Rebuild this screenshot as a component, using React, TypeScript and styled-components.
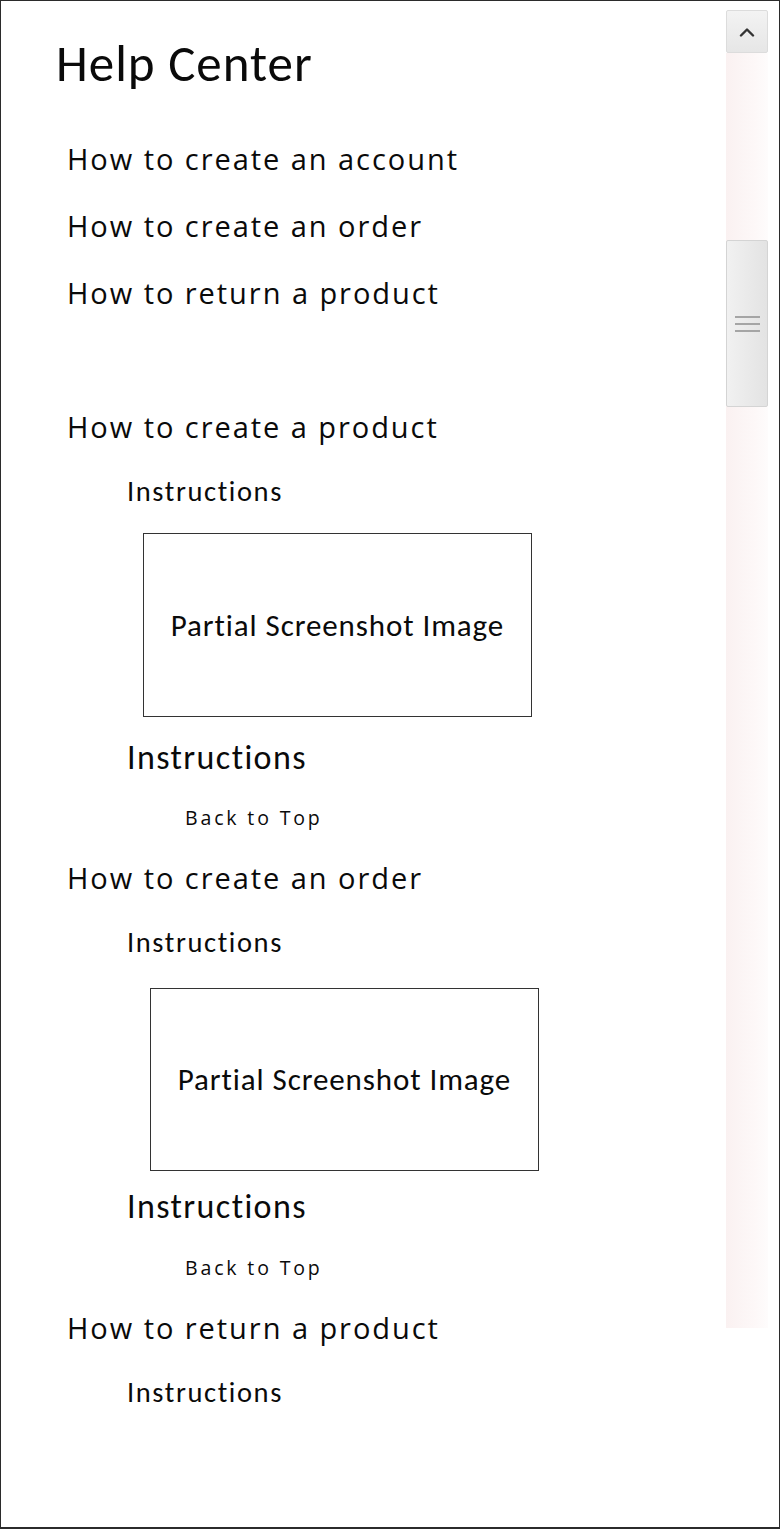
import React from "react";
import styled, { createGlobalStyle } from "styled-components";

const GlobalStyle = createGlobalStyle`
  html, body { margin: 0; padding: 0; background: #ffffff; }
  body { font-family: "Carlito", "Lato", sans-serif; color: #111; }
  * { box-sizing: border-box; }
`;

const Page = styled.div`
  width: 780px;
  height: 1529px;
  border: 1px solid #2b2b2b;
  border-bottom-width: 2px;
  display: flex;
  flex-direction: row;
  align-items: flex-start;
  overflow: hidden;
  background: #fff;
`;

const Main = styled.main`
  flex: 1;
  display: flex;
  flex-direction: column;
  align-items: flex-start;
`;

const Title = styled.h1`
  margin: 37px 0 0 55px;
  font-family: "Carlito", "Lato", sans-serif;
  font-weight: 400;
  font-size: 51px;
  line-height: 1;
  letter-spacing: 1px;
  color: #0a0a0a;
`;

const TopicList = styled.nav`
  display: flex;
  flex-direction: column;
  gap: 38px;
  margin: 55px 0 0 66px;
`;

const TopicLink = styled.a`
  display: block;
  font-family: "Open Sans", sans-serif;
  font-size: 29px;
  line-height: 1;
  letter-spacing: 1.95px;
  color: #0a0a0a;
  text-decoration: none;
`;

const Section = styled.section<{ $top: number }>`
  display: flex;
  flex-direction: column;
  align-items: flex-start;
  margin-top: ${(p) => p.$top}px;
`;

const SectionHeading = styled.h2`
  margin: 0 0 0 66px;
  font-family: "Open Sans", sans-serif;
  font-weight: 400;
  font-size: 29px;
  line-height: 1;
  letter-spacing: 1.95px;
  color: #0a0a0a;
`;

const Instructions = styled.p<{ $large?: boolean; $top: number }>`
  margin: ${(p) => p.$top}px 0 0 126px;
  font-family: "Carlito", "Lato", sans-serif;
  font-size: ${(p) => (p.$large ? 34 : 28.5)}px;
  letter-spacing: ${(p) => (p.$large ? 1.4 : 1.6)}px;
  line-height: 1;
  color: #0a0a0a;
`;

const ShotBox = styled.div<{ $left: number; $top: number; $height: number }>`
  margin: ${(p) => p.$top}px 0 0 ${(p) => p.$left}px;
  width: 389px;
  height: ${(p) => p.$height}px;
  border: 1px solid #333;
  display: flex;
  align-items: center;
  justify-content: center;
  padding-bottom: 1px;
  font-family: "Carlito", "Lato", sans-serif;
  font-size: 31px;
  letter-spacing: 0.9px;
  color: #0a0a0a;
`;

const BackToTop = styled.a<{ $top: number }>`
  display: block;
  margin: ${(p) => p.$top}px 0 0 184px;
  font-family: "Open Sans", sans-serif;
  font-size: 19.5px;
  line-height: 1;
  letter-spacing: 2.85px;
  color: #0a0a0a;
  text-decoration: none;
`;

const Scrollbar = styled.div`
  flex: 0 0 42px;
  width: 42px;
  height: 1318px;
  margin: 9px 11px 0 0;
  display: flex;
  flex-direction: column;
`;

const ScrollButton = styled.div`
  height: 43px;
  display: flex;
  align-items: center;
  justify-content: center;
  background: linear-gradient(to bottom, #f3f3f3, #e6e6e6);
  border: 1px solid #dcdcdc;
  border-radius: 2px;
`;

const ScrollTrack = styled.div`
  flex: 1;
  display: flex;
  flex-direction: column;
  padding-top: 187px;
  background: linear-gradient(to right, #faf1f1, #fdf8f8 70%, #fefcfc);
`;

const ScrollThumb = styled.div`
  height: 167px;
  display: flex;
  align-items: center;
  justify-content: center;
  background: linear-gradient(to right, #f1f1f1, #e3e3e3);
  border: 1px solid #d4d4d4;
  border-radius: 2px;
`;

const Grip = styled.div`
  width: 25px;
  display: flex;
  flex-direction: column;
  gap: 5px;
  & > span {
    display: block;
    height: 2px;
    background: #a5a5a5;
  }
`;

type SectionData = {
  title: string;
  top: number;
  instrTop: number;
  box?: { left: number; top: number; height: number };
  largeTop?: number;
  backTop?: number;
};

const sections: SectionData[] = [
  { title: "How to create a product", top: 105, instrTop: 37, box: { left: 142, top: 26.5, height: 184 }, largeTop: 24.4, backTop: 32.2 },
  { title: "How to create an order", top: 35.9, instrTop: 37, box: { left: 149, top: 30.5, height: 183 }, largeTop: 19.4, backTop: 33.2 },
  { title: "How to return a product", top: 35.9, instrTop: 37 },
];

export default function App() {
  return (
    <>
      <GlobalStyle />
      <Page>
        <Main>
          <Title>Help Center</Title>
          <TopicList>
            <TopicLink>How to create an account</TopicLink>
            <TopicLink>How to create an order</TopicLink>
            <TopicLink>How to return a product</TopicLink>
          </TopicList>
          {sections.map((s) => (
            <Section key={s.title} $top={s.top}>
              <SectionHeading>{s.title}</SectionHeading>
              <Instructions $top={s.instrTop}>Instructions</Instructions>
              {s.box && (
                <ShotBox $left={s.box.left} $top={s.box.top} $height={s.box.height}>
                  Partial Screenshot Image
                </ShotBox>
              )}
              {s.largeTop !== undefined && (
                <Instructions $large $top={s.largeTop}>
                  Instructions
                </Instructions>
              )}
              {s.backTop !== undefined && <BackToTop $top={s.backTop}>Back to Top</BackToTop>}
            </Section>
          ))}
        </Main>
        <Scrollbar>
          <ScrollButton>
            <svg width="16" height="10" viewBox="0 0 16 10">
              <path d="M2 8.5 L8 2.5 L14 8.5" fill="none" stroke="#333" strokeWidth="2.4" strokeLinecap="round" strokeLinejoin="round" />
            </svg>
          </ScrollButton>
          <ScrollTrack>
            <ScrollThumb>
              <Grip>
                <span />
                <span />
                <span />
              </Grip>
            </ScrollThumb>
          </ScrollTrack>
        </Scrollbar>
      </Page>
    </>
  );
}
